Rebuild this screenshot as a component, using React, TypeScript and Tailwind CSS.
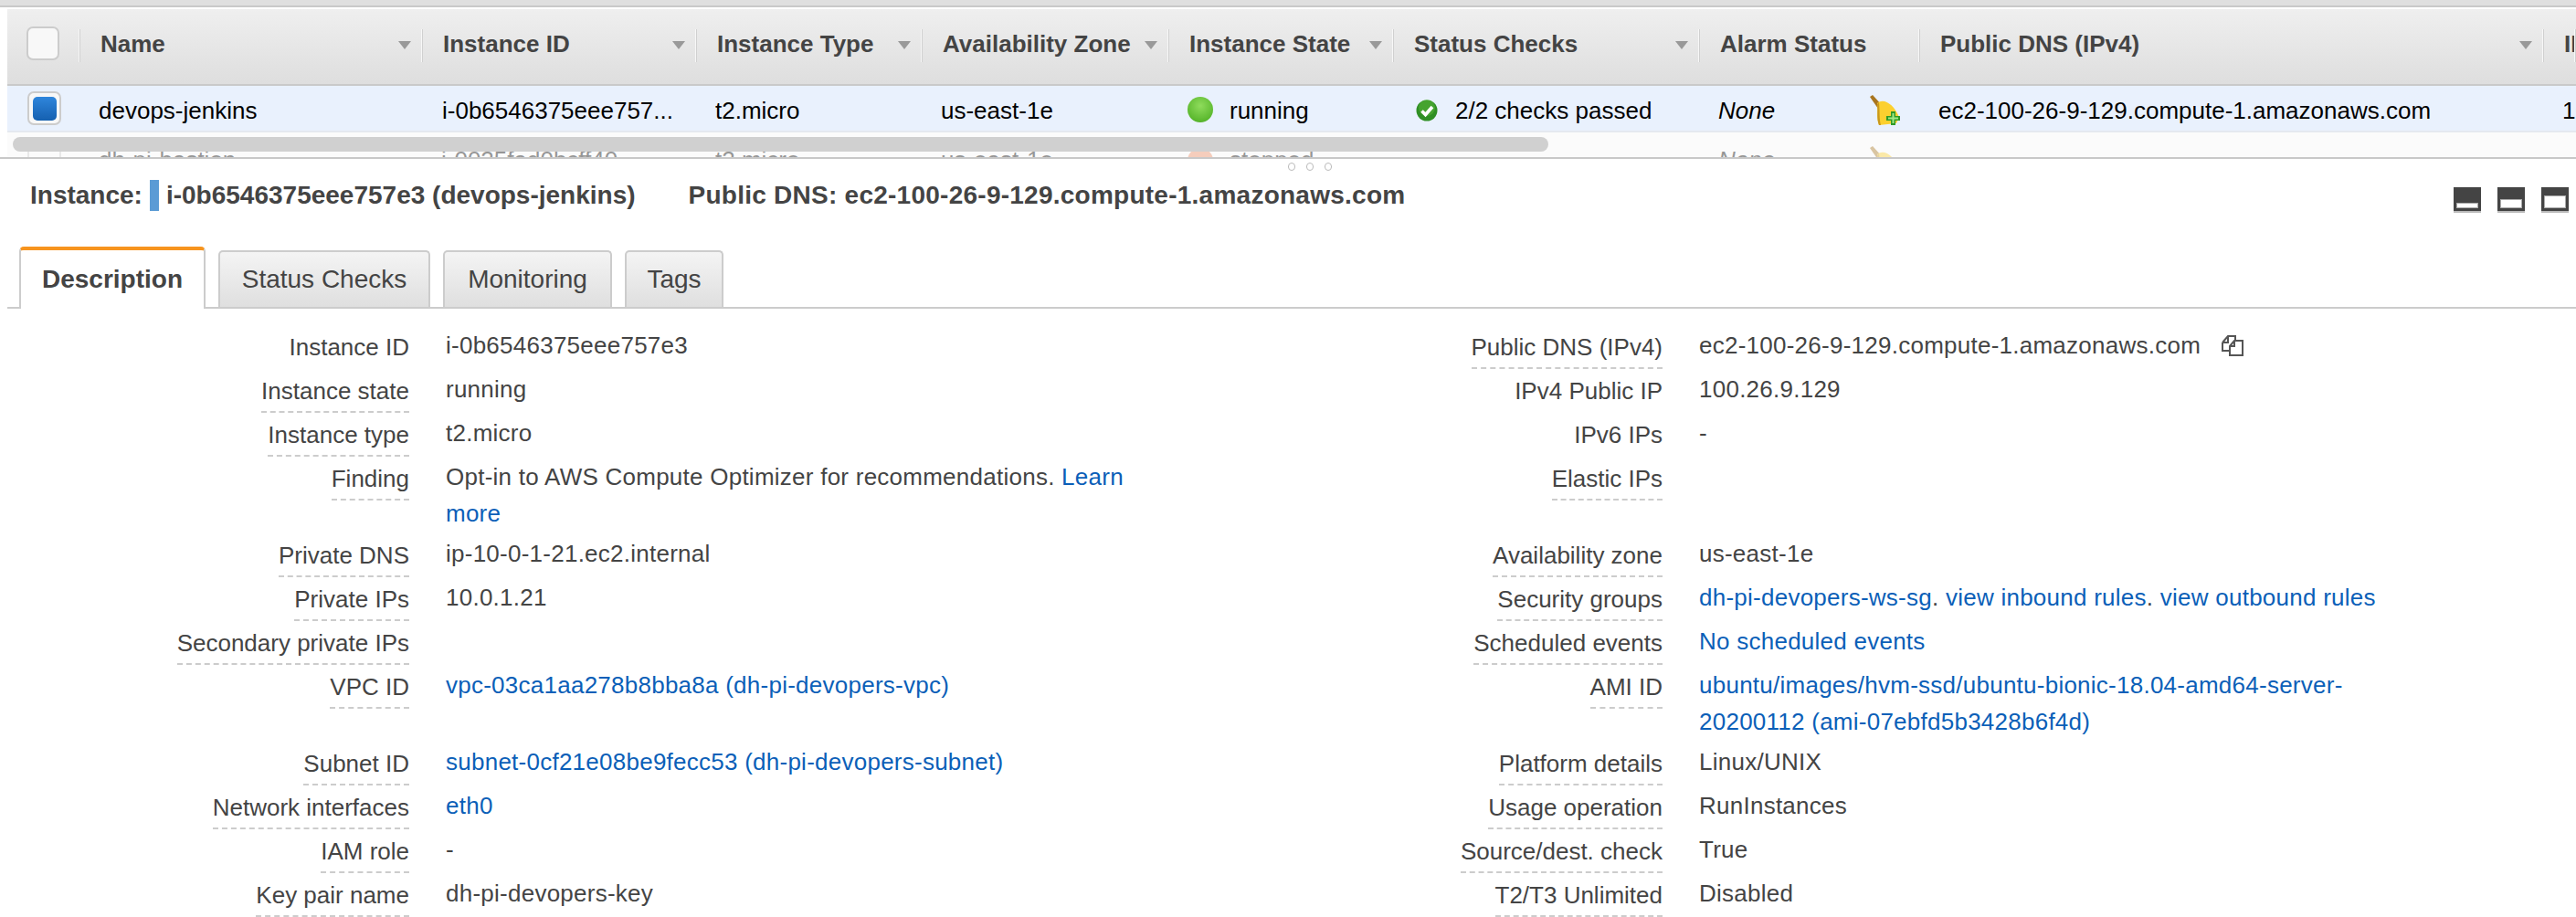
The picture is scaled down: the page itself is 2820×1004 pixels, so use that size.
import { FunctionComponent, ReactNode } from "react";

const cols = [
  { w: "w-[80px]", title: "" },
  { w: "w-[375px]", title: "Name", caret: true, cell: "devops-jenkins", faint: "dh-pi-bastion" },
  { w: "w-[300px]", title: "Instance ID", caret: true, cell: "i-0b6546375eee757...", faint: "i-0025fad0bcff40..." },
  { w: "w-[247px]", title: "Instance Type", caret: true, cell: "t2.micro", faint: "t2.micro" },
  { w: "w-[270px]", title: "Availability Zone", caret: true, cell: "us-east-1e", faint: "us-east-1e" },
  { w: "w-[246px]", title: "Instance State", caret: true, cell: "running", icon: "dot", faint: "stopped" },
  { w: "w-[335px]", title: "Status Checks", caret: true, cell: "2/2 checks passed", icon: "check", faint: "" },
  { w: "w-[241px]", title: "Alarm Status", cell: "None", icon: "bell", faint: "None" },
  { w: "w-[683px]", title: "Public DNS (IPv4)", caret: true, cell: "ec2-100-26-9-129.compute-1.amazonaws.com", faint: "" },
  { w: "w-[35px]", title: "IP", cell: "100.26.9.129", faint: "" },
];

const Bell = ({ className }: { className: string }) => (
  <svg viewBox="0 0 33 33" className={`absolute left-[186px] w-[33px] h-[33px] ${className}`}>
    <path d="M0 2 L3 0 L13 11 L9 15 Z" fill="#a8751f" />
    <path d="M8 9 C15 3 26 10 32 24 L29 31 L10 33 C7 26 9 18 8 9 Z" fill="#fcd02f" />
    <path d="M8 10 C9 18 7 26 10 33 L12 33 C10 26 11 18 10 8 Z" fill="#c8981d" />
    <path d="M23 18 h5 v5 h5 v5 h-5 v5 h-5 v-5 h-5 v-5 h5 Z" fill="#2f9a26" />
    <path d="M24.5 20 h2 v4.5 h4.5 v2 h-4.5 v4.5 h-2 v-4.5 h-4.5 v-2 h4.5 Z" fill="#9fe887" />
  </svg>
);

const Check = () => (
  <svg viewBox="0 0 24 24" className="w-[24px] h-[24px] ml-[4px] mr-[19px] shrink-0">
    <circle cx="12" cy="12" r="11.5" fill="#2f8f24" />
    <circle cx="12" cy="9" r="9" fill="#5cb83a" opacity=".5" />
    <path d="M6.5 12.5 L10.5 16.5 L18 8" fill="none" stroke="#fff" strokeWidth="3.6" />
  </svg>
);

const Row = ({ label, dash = true, children, className = "" }: { label: string; dash?: boolean; children?: ReactNode; className?: string }) => (
  <div className={`flex items-start pb-[8px] ${className}`}>
    <div className="w-[440px] h-[40px] flex justify-end shrink-0">
      <span className={`text-[#444] leading-[36px] mt-[4px] h-[40px] box-content ${dash ? "border-b-2 border-dashed border-[#ccc]" : ""}`}>{label}</span>
    </div>
    <div className="ml-[40px] leading-[40px] text-[#444] w-[760px] tracking-[0.25px]">{children}</div>
  </div>
);

const A = ({ children }: { children: ReactNode }) => <span className="text-[#0b5fb8]">{children}</span>;

const Tab = ({ label, on, w }: { label: string; on?: boolean; w: string }) =>
  on ? (
    <div className={`${w} h-[68px] rounded-t-[5px] border-x-2 border-[#ccc] border-t-4 border-t-[#f7941e] bg-white text-[#444] text-[28px] font-bold flex items-center justify-center -mb-[2px] relative z-10`}>
      {label}
    </div>
  ) : (
    <div className={`${w} h-[62px] rounded-t-[5px] border-x-2 border-t-2 border-[#ccc] bg-gradient-to-b from-[#f4f4f4] to-[#dfdfdf] text-[#444] text-[28px] flex items-center justify-center`}>
      {label}
    </div>
  );

const PaneBtn = ({ h }: { h: string }) => (
  <div className="w-[30px] h-[28px] bg-[#444] border-b-2 border-[#bbb] flex items-end justify-center pb-[3px]">
    <div className={`w-[24px] ${h} bg-white border border-[#aaa]`} />
  </div>
);

const App: FunctionComponent = () => {
  return (
    <div className="w-[2820px] h-[1004px] overflow-hidden bg-white font-['Liberation_Sans',Arial,sans-serif] text-[26px]">
      <div className="h-[6px] bg-[#dfdfdf]" />
      <div className="h-[2px] bg-[#c9c9c9]" />
      <div className="pl-[8px] pt-[2px] border-b-2 border-[#c8c8c8]">
        <div className="flex h-[82px] bg-gradient-to-b from-[#efefef] to-[#dedede]">
          {cols.map((c, i) => (
            <div key={i} className={`${c.w} shrink-0 relative flex items-center h-full pb-[6px] ${i === 0 ? "" : "pl-[22px] pr-[12px]"}`}>
              {i === 0 ? (
                <div className="ml-[21px] mb-[2px] w-[36px] h-[37px] rounded-[7px] border-2 border-[#ccc] bg-[#f8f8f8]" />
              ) : (
                <span className="font-bold text-[#444] whitespace-nowrap">{c.title}</span>
              )}
              {c.caret && (
                <div className="absolute right-[13px] top-[35px] w-0 h-0 border-x-[7px] border-x-transparent border-t-[9px] border-t-[#999]" />
              )}
              <div className="absolute right-0 top-[22px] w-[2px] h-[36px] bg-[#f7f7f7] border-r border-[#d0d0d0]" />
            </div>
          ))}
        </div>
        <div className="h-[2px] bg-[#c9c9c9]" />
        <div className="flex h-[49px] bg-[#e9f1fd] border-b-2 border-[#e5e9f0] box-content">
          {cols.map((c, i) => (
            <div key={i} className={`${c.w} shrink-0 relative flex items-center h-full pt-[5px] ${i === 0 ? "" : i === 2 ? "pl-[21px]" : "pl-[20px]"} whitespace-nowrap text-black`}>
              {i === 0 ? (
                <div className="ml-[22px] -mt-[5px] w-[37px] h-[37px] rounded-[7px] border-2 border-[#ccc] bg-[#f8f8f8] flex items-center justify-center">
                  <div className="w-[26px] h-[26px] rounded-[5px] bg-gradient-to-b from-[#2f86dc] to-[#1560b0]" />
                </div>
              ) : (
                <>
                  {c.icon === "dot" && (
                    <div className="w-[28px] h-[28px] mr-[18px] -mt-[3px] rounded-full shrink-0 bg-[radial-gradient(circle_at_50%_35%,#8fdc5c,#5cb92f_70%,#3f9c22)]" />
                  )}
                  {c.icon === "check" && <Check />}
                  <span className={c.icon === "bell" ? "italic" : ""}>{c.cell}</span>
                  {c.icon === "bell" && <Bell className="top-[10px]" />}
                </>
              )}
            </div>
          ))}
        </div>
        <div className="h-[27px] bg-[#fbfbfb] relative overflow-hidden">
          <div className="flex h-[49px] pt-[12px] opacity-40">
            {cols.map((c, i) => (
              <div key={i} className={`${c.w} shrink-0 relative flex items-center h-full ${i === 0 ? "" : "pl-[20px]"} whitespace-nowrap text-black`}>
                {i === 0 && <div className="ml-[22px] w-[37px] h-[37px] rounded-[7px] border-2 border-[#ccc]" />}
                {c.icon === "dot" && <div className="w-[28px] h-[28px] mr-[18px] rounded-full shrink-0 bg-[#ee8a5f]" />}
                {i > 0 && <span className={c.icon === "bell" ? "italic" : ""}>{c.faint}</span>}
                {c.icon === "bell" && <Bell className="top-[3px]" />}
              </div>
            ))}
          </div>
          <div className="absolute left-[6px] top-[5px] w-[1681px] h-[16px] rounded-full bg-[#d0d0d0]" />
        </div>
      </div>
      <div className="flex justify-center gap-[12px] h-[10px] mt-[4px] pl-[48px]">
        <div className="w-[8px] h-[9px] rounded-full border border-[#bbb]" />
        <div className="w-[8px] h-[9px] rounded-full border border-[#bbb]" />
        <div className="w-[8px] h-[9px] rounded-full border border-[#bbb]" />
      </div>
      <div className="flex items-center h-[42px] mt-[5px] pl-[33px] pr-[8px] font-bold text-[28px] text-[#444]">
        <span>Instance:</span>
        <div className="w-[10px] h-[34px] bg-[#5b9bd5] ml-[8px] mr-[8px]" />
        <span>i-0b6546375eee757e3 (devops-jenkins)</span>
        <span className="ml-[58px] tracking-[0.25px]">Public DNS: ec2-100-26-9-129.compute-1.amazonaws.com</span>
        <div className="ml-auto flex gap-[18px] mt-[10px]">
          <PaneBtn h="h-[6px]" />
          <PaneBtn h="h-[10px]" />
          <PaneBtn h="h-[14px]" />
        </div>
      </div>
      <div className="flex items-end gap-[14px] mt-[35px] ml-[8px] pl-[13px] border-b-2 border-[#ccc] h-[68px]">
        <Tab on label="Description" w="w-[204px]" />
        <Tab label="Status Checks" w="w-[232px]" />
        <Tab label="Monitoring" w="w-[185px]" />
        <Tab label="Tags" w="w-[108px]" />
      </div>
      <div className="flex mt-[20px] pl-[8px]">
        <div className="w-[1372px] shrink-0">
          <Row label="Instance ID" dash={false}>i-0b6546375eee757e3</Row>
          <Row label="Instance state">running</Row>
          <Row label="Instance type">t2.micro</Row>
          <Row label="Finding" className="h-[84px]">Opt-in to AWS Compute Optimizer for recommendations. <A>Learn more</A></Row>
          <Row label="Private DNS">ip-10-0-1-21.ec2.internal</Row>
          <Row label="Private IPs">10.0.1.21</Row>
          <Row label="Secondary private IPs" />
          <Row label="VPC ID" className="h-[84px]"><A>vpc-03ca1aa278b8bba8a (dh-pi-devopers-vpc)</A></Row>
          <Row label="Subnet ID"><A>subnet-0cf21e08be9fecc53 (dh-pi-devopers-subnet)</A></Row>
          <Row label="Network interfaces"><A>eth0</A></Row>
          <Row label="IAM role">-</Row>
          <Row label="Key pair name">dh-pi-devopers-key</Row>
        </div>
        <div className="flex-1">
          <Row label="Public DNS (IPv4)">
            <span className="flex items-center">ec2-100-26-9-129.compute-1.amazonaws.com
              <svg viewBox="0 0 26 24" className="w-[26px] h-[24px] ml-[22px]" fill="none" stroke="#555" strokeWidth="2">
                <path d="M2 9 L8 2 H16 V7 M2 9 V18 H9 M8 2 V9 H2" />
                <path d="M10 13 L15 7 H24 V23 H10 Z M15 7 V13 H10" />
              </svg>
            </span>
          </Row>
          <Row label="IPv4 Public IP" dash={false}>100.26.9.129</Row>
          <Row label="IPv6 IPs" dash={false}>-</Row>
          <Row label="Elastic IPs" className="h-[84px]" />
          <Row label="Availability zone">us-east-1e</Row>
          <Row label="Security groups"><A>dh-pi-devopers-ws-sg</A>. <A>view inbound rules</A>. <A>view outbound rules</A></Row>
          <Row label="Scheduled events"><A>No scheduled events</A></Row>
          <Row label="AMI ID" className="h-[84px]"><A>ubuntu/images/hvm-ssd/ubuntu-bionic-18.04-amd64-server-20200112 (ami-07ebfd5b3428b6f4d)</A></Row>
          <Row label="Platform details">Linux/UNIX</Row>
          <Row label="Usage operation">RunInstances</Row>
          <Row label="Source/dest. check">True</Row>
          <Row label="T2/T3 Unlimited">Disabled</Row>
        </div>
      </div>
    </div>
  );
};

export default App;
